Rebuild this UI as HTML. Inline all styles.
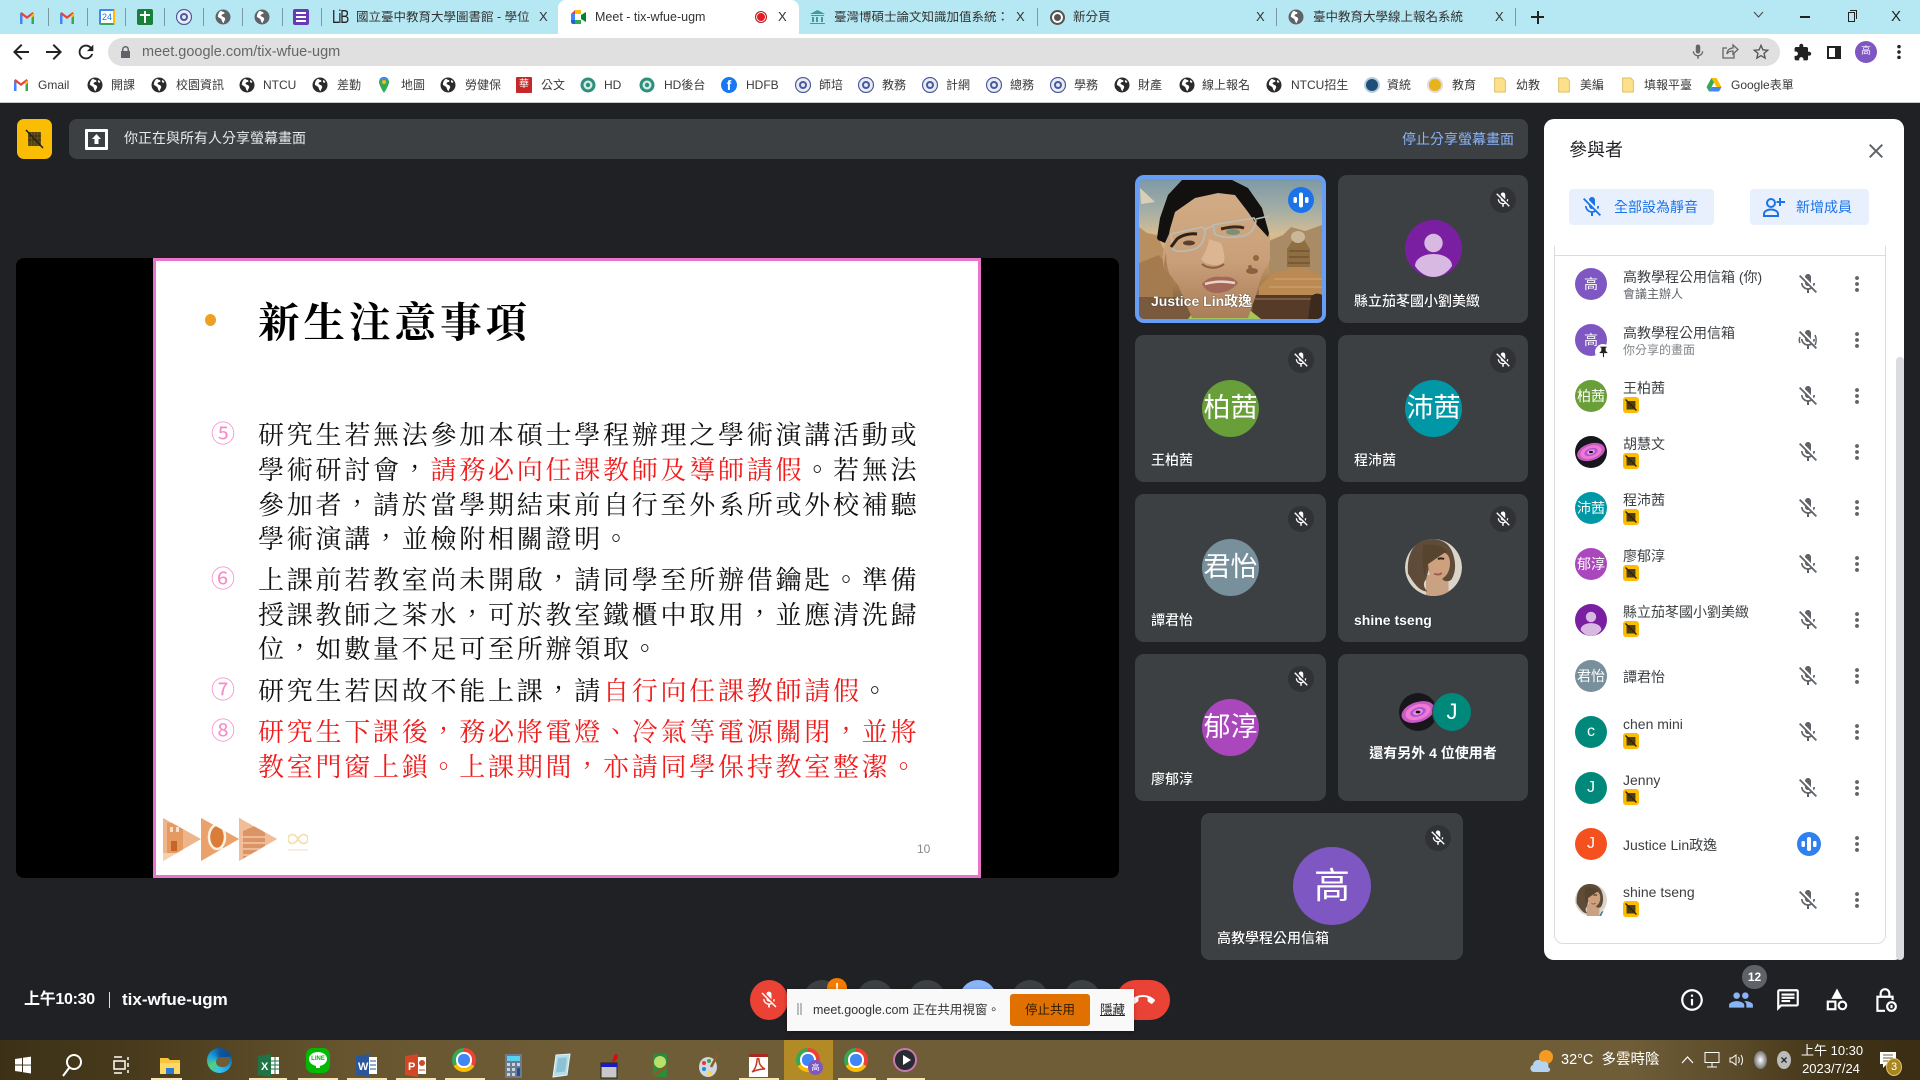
<!DOCTYPE html>
<html lang="zh-TW"><head><meta charset="utf-8"><title>Meet - tix-wfue-ugm</title>
<style>
*{box-sizing:border-box}
html,body{margin:0;padding:0;width:1920px;height:1080px;overflow:hidden;background:#202124;font-family:"Liberation Sans","Noto Sans CJK TC",sans-serif}
.a,.t,.i,.tile,.row,.row>*{position:absolute}
.t{white-space:nowrap;line-height:1}
.sep{position:absolute;top:8px;width:1px;height:18px;background:#7a9aa3}
.tb{font-size:12.5px;color:#333;top:11px}
.bm{font-size:12px;color:#3a3a3a;top:79px}
.g{position:absolute;top:77px;width:16px;height:16px}
.tile{background:#3c4043;border-radius:9px}
.av{position:absolute;border-radius:50%;color:#fff;text-align:center}
.nm{position:absolute;left:16px;bottom:14px;font-size:14px;font-weight:500;color:#fff;white-space:nowrap;line-height:16px;text-shadow:0 0 1px #000}
.mb{position:absolute;width:26px;height:26px;border-radius:50%;background:#303235;right:12px;top:12px}
.mb svg{position:absolute;left:4px;top:4px;width:18px;height:18px;fill:#fff}
.row{left:1554px;width:330px;height:56px}
.row .ra{left:21px;top:12px;width:32px;height:32px;border-radius:50%;color:#fff;text-align:center;line-height:32px;font-size:14px}
.row .n{left:69px;font-size:14px;color:#3c4043;white-space:nowrap;line-height:16px;top:12px}
.row .n.h{top:13px}
.row .n.c{top:21px}
.row .s{left:69px;top:31px;font-size:12px;line-height:14px;color:#5f6368;white-space:nowrap}
.row .b{left:69px;top:29px;width:16px;height:16px}
.row .m{left:242px;top:16px;width:24px;height:24px;fill:#5f6368}
.row .d{left:292px;top:17px;width:22px;height:22px;fill:#5f6368}
.sl{position:absolute;left:258px;white-space:nowrap;font-family:"Liberation Serif","Noto Serif CJK SC",serif;font-size:26px;letter-spacing:2.75px;line-height:34px;color:#111}
.sl b{font-weight:400;color:#f01c1c}
.cn{position:absolute;left:209px;width:28px;text-align:center;font-size:24px;line-height:34px;color:#f48cc8;font-family:"DejaVu Sans",sans-serif;font-weight:300}
.cb{position:absolute;top:980px;width:38px;height:40px;border-radius:50%;background:#3c4043}
.ti{position:absolute;top:1050px;width:30px;height:30px}
.ul{position:absolute;top:1078px;height:2px;background:#f6e6b4}
.chrome{position:absolute;border-radius:50%;background:conic-gradient(#ea4335 0 120deg,#fbbc04 120deg 240deg,#34a853 240deg 360deg)}
.chrome:after{content:"";position:absolute;left:27%;top:27%;width:46%;height:46%;border-radius:50%;background:#4285f4;box-shadow:0 0 0 2px #fff}
</style></head><body>
<svg width="0" height="0" style="position:absolute">
<defs>
<symbol id="micoff" viewBox="0 0 24 24"><path d="M19 11h-1.700c0 .74-.16 1.430-.43 2.050l1.230 1.230c.56-.98.9-2.090.9-3.280zm-4.020.17c0-.06.02-.11.02-.17V5c0-1.660-1.340-3-3-3s-3 1.340-3 3v.18l5.980 5.990zM4.270 3L3 4.270l6.010 6.010V11c0 1.660 1.330 3 2.990 3 .22 0 .44-.03.65-.08l1.660 1.660c-.71.33-1.500.52-2.310.52-2.760 0-5.300-2.100-5.300-5.100H5c0 3.410 2.720 6.230 6 6.720V21h2v-3.280c.91-.13 1.770-.45 2.540-.9L19.730 21 21 19.730 4.270 3z"/></symbol>
<symbol id="more" viewBox="0 0 24 24"><circle cx="12" cy="5.500" r="2.100"/><circle cx="12" cy="12" r="2.100"/><circle cx="12" cy="18.500" r="2.100"/></symbol>
<symbol id="globe" viewBox="0 0 16 16"><circle cx="8" cy="8" r="7.500" fill="#2b2b2b"/><path d="M6 1.600C7 3 9 2.600 9.500 3.800 9.800 5 8 5 7 5.600 5.600 6.400 7.500 7.600 8.600 8c1.500.6 2 2 1.300 3.200-.5 1-1.200 1.400-1.200 3-1.200-.6-1.800-2-2-3.300C6.500 9.500 4 9 2.800 7.600 3 5 4 3 6 1.600z" fill="#fff"/><path d="M11.500 2.800l2 2.200-1.500 1-1.200-1.500z" fill="#fff"/></symbol>
<symbol id="gglobe" viewBox="0 0 16 16"><circle cx="8" cy="8" r="7.500" fill="#5f6368"/><path d="M6 1.600C7 3 9 2.600 9.500 3.800 9.800 5 8 5 7 5.600 5.600 6.400 7.500 7.600 8.600 8c1.500.6 2 2 1.300 3.200-.5 1-1.200 1.400-1.200 3-1.200-.6-1.800-2-2-3.300C6.500 9.500 4 9 2.800 7.600 3 5 4 3 6 1.600z" fill="#fff"/></symbol>
<symbol id="gmail" viewBox="0 0 16 14"><path d="M1 13V2.600L3.500 3v10z" fill="#4285f4"/><path d="M15 13V2.600L12.500 3v10z" fill="#34a853"/><path d="M1 2.600l7 5.400 7-5.400L13.500 1 8 5.200 2.500 1z" fill="#ea4335"/><path d="M12.500 3v4L15 5V2.600z" fill="#fbbc04"/></symbol>
<symbol id="seal" viewBox="0 0 16 16"><circle cx="8" cy="8" r="7.500" fill="#e9ecf5" stroke="#4a5a9a" stroke-width="1.200"/><circle cx="8" cy="8" r="4" fill="#4a5a9a"/><circle cx="8" cy="8" r="2" fill="#dfe6f5"/></symbol>
<symbol id="teal" viewBox="0 0 16 16"><circle cx="8" cy="8" r="7.500" fill="#2f8f7c"/><circle cx="8" cy="8" r="4.500" fill="#d7ece6"/><circle cx="8" cy="8" r="2.200" fill="#2f8f7c"/></symbol>
<symbol id="fold" viewBox="0 0 14 18"><path d="M1 1h9l3 3v13H1z" fill="#ffe08a" stroke="#d8b95c"/></symbol>
<symbol id="nop" viewBox="0 0 16 16"><rect width="16" height="16" rx="3" fill="#fbbc04"/><rect x="3.500" y="4" width="9" height="8.500" fill="#5a4a1c"/><path d="M5 4v8.500M7 4v8.500M9 4v8.500M11 4v8.500" stroke="#3a2c08" stroke-width=".8"/><path d="M2.500 2.500l11 11" stroke="#2b2208" stroke-width="1.300"/></symbol>
<symbol id="galaxy" viewBox="0 0 38 38"><circle cx="19" cy="19" r="19" fill="#16161b"/><ellipse cx="19" cy="19" rx="17" ry="10" transform="rotate(-18 19 19)" fill="#c85ac8"/><ellipse cx="19" cy="19" rx="13" ry="7.500" transform="rotate(-18 19 19)" fill="#f07ad0"/><ellipse cx="19" cy="19" rx="8" ry="4.500" transform="rotate(-18 19 19)" fill="#a856d8"/><ellipse cx="19" cy="19" rx="5" ry="2.800" transform="rotate(-18 19 19)" fill="#f590d8"/><ellipse cx="19" cy="19" rx="2.400" ry="1.400" fill="#111"/></symbol>
<symbol id="woman" viewBox="0 0 38 38"><circle cx="19" cy="19" r="19" fill="#d9d5c9"/><path d="M14 38V24h15v14z" fill="#c9a183"/><path d="M29 38c1-4 3-6 5-6l-3 6z" fill="#4a7a94"/><path d="M2 23C1 10 6 1 16 0c8-.5 14 3 16 10 2 6 2 12-1 17-2 2-5 1-6 0l3-13-10-2-4 15c-2 2-2 5 1 8-5 0-9-5-13-12z" fill="#5e4b3a"/><path d="M15 14c2-3 7-5 11-5 3 1 4 4 4 7 0 6-3 10-7 11-3 1-6-1-7-5z" fill="#cfa07e"/><path d="M12 4c6-1 12 0 16 4l-13 9-2 8c-1-6-2-14-1-21z" fill="#57442f"/><path d="M22 13.500c1-.8 3-.8 4 0" stroke="#2e2018" stroke-width="1.300" fill="none"/><path d="M19.500 23c1.500 1 4 1 5-.5" stroke="#9a5a50" stroke-width="1.200" fill="none"/></symbol>
<symbol id="person" viewBox="0 0 57 57"><circle cx="28.500" cy="28.500" r="28.500" fill="#7b1fa2"/><circle cx="28.500" cy="23" r="9.200" fill="#d7b9e2"/><path d="M10 46c0-7 8-12 18.500-12S47 39 47 46c-4.500 6.500-11 11-18.500 11S14.500 52.500 10 46z" fill="#d7b9e2"/></symbol>
</defs></svg>

<!-- tab strip -->
<div class="a" style="left:0;top:0;width:1920px;height:34px;background:#b5e8f3"></div>
<svg class="i" style="left:19px;top:11px" width="16" height="14"><use href="#gmail"/></svg>
<svg class="i" style="left:59px;top:11px" width="16" height="14"><use href="#gmail"/></svg>
<div class="i" style="left:99px;top:9px;width:16px;height:16px;background:#fff;border:2px solid #4285f4;border-bottom-color:#34a853;border-right-color:#fbbc04;border-radius:2px;font-size:9px;line-height:12px;text-align:center;color:#1a73e8">24</div>
<div class="i" style="left:137px;top:9px;width:16px;height:16px;background:#188038;border-radius:2px"><div class="a" style="left:7px;top:2px;width:2px;height:12px;background:#fff"></div><div class="a" style="left:3px;top:5px;width:10px;height:2px;background:#fff"></div></div>
<svg class="i" style="left:176px;top:9px" width="16" height="16"><use href="#seal"/></svg>
<svg class="i" style="left:215px;top:9px" width="16" height="16"><use href="#gglobe"/></svg>
<svg class="i" style="left:254px;top:9px" width="16" height="16"><use href="#gglobe"/></svg>
<div class="i" style="left:293px;top:9px;width:16px;height:16px;background:#673ab7;border-radius:2px"><div class="a" style="left:3px;top:3px;width:10px;height:2px;background:#fff"></div><div class="a" style="left:3px;top:7px;width:10px;height:2px;background:#fff"></div><div class="a" style="left:3px;top:11px;width:10px;height:2px;background:#fff"></div></div>
<div class="sep" style="left:48px"></div><div class="sep" style="left:87px"></div><div class="sep" style="left:125px"></div><div class="sep" style="left:164px"></div><div class="sep" style="left:203px"></div><div class="sep" style="left:242px"></div><div class="sep" style="left:282px"></div><div class="sep" style="left:321px"></div>
<div class="t" style="left:332px;top:8px;font-size:18px;color:#222;letter-spacing:-1.500px;transform:scaleX(.75);transform-origin:left">LiB</div>
<div class="t tb" style="left:356px;width:173px;overflow:hidden">國立臺中教育大學圖書館 - 學位論文</div>
<div class="t" style="left:539px;top:10px;font-size:13px;color:#333">X</div>
<div class="a" style="left:558px;top:0;width:241px;height:34px;background:#fff;border-radius:8px 8px 0 0"></div>
<svg class="i" style="left:571px;top:9px" width="16" height="16" viewBox="0 0 16 16"><path d="M0 5l4-4h6v4H4v0z" fill="#ea4335"/><path d="M0 5h4v6H0z" fill="#4285f4"/><path d="M0 11h4v0l6 0v4H2c-1 0-2-1-2-2z" fill="#1967d2"/><path d="M4 5h6v0l0 6H4z" fill="#fff"/><path d="M10 1v4H4V1z" fill="#fbbc04"/><path d="M4 11h6v4H4z" fill="#34a853"/><path d="M10 6l5-3v10l-5-3z" fill="#00832d"/></svg>
<div class="t tb" style="left:595px">Meet - tix-wfue-ugm</div>
<div class="i" style="left:755px;top:11px;width:12px;height:12px;border-radius:50%;background:#e31c25;border:1.500px solid #b5161d;box-shadow:inset 0 0 0 1px #fff"></div>
<div class="t" style="left:778px;top:10px;font-size:13px;color:#333">X</div>
<svg class="i" style="left:809px;top:9px" width="17" height="16" viewBox="0 0 17 16"><path d="M1 5l7.500-4L16 5zM2 6h13v1H2zM3 8h2v5H3zM7 8h2v5H7zM12 8h2v5h-2zM1 14h15v1H1z" fill="#3c9e94"/></svg>
<div class="t tb" style="left:834px;width:175px;overflow:hidden">臺灣博碩士論文知識加值系統：自由的</div>
<div class="t" style="left:1016px;top:10px;font-size:13px;color:#333">X</div><div class="sep" style="left:1037px"></div>
<div class="a" style="left:1050px;top:10px;width:15px;height:15px;border-radius:50%;background:#555;border:2px solid #555;box-shadow:inset 0 0 0 2px #fff"></div>
<div class="t tb" style="left:1073px">新分頁</div>
<div class="t" style="left:1256px;top:10px;font-size:13px;color:#333">X</div><div class="sep" style="left:1276px"></div>
<svg class="i" style="left:1288px;top:9px" width="16" height="16"><use href="#gglobe"/></svg>
<div class="t tb" style="left:1313px">臺中教育大學線上報名系統</div>
<div class="t" style="left:1495px;top:10px;font-size:13px;color:#333">X</div><div class="sep" style="left:1515px"></div>
<div class="a" style="left:1531px;top:16px;width:13px;height:2px;background:#222"></div><div class="a" style="left:1537px;top:10.500px;width:2px;height:13px;background:#222"></div>
<svg class="i" style="left:1753px;top:11px" width="11" height="8"><path d="M1 1l4.500 5L10 1" fill="none" stroke="#444"/></svg>
<div class="a" style="left:1800px;top:16px;width:10px;height:1.500px;background:#222"></div>
<div class="a" style="left:1848px;top:12px;width:7px;height:10px;border:1px solid #222"></div><div class="a" style="left:1850px;top:10px;width:7px;height:9px;border:1px solid #222;border-left:0;border-bottom:0"></div>
<div class="t" style="left:1891px;top:9px;font-size:15px;color:#222">X</div>

<!-- toolbar -->
<div class="a" style="left:0;top:34px;width:1920px;height:68px;background:#fff"></div>
<svg class="i" style="left:9px;top:40px" width="24" height="24" viewBox="0 0 24 24" fill="#222"><path d="M20 11H7.830l5.590-5.590L12 4l-8 8 8 8 1.410-1.410L7.830 13H20v-2z"/></svg>
<svg class="i" style="left:42px;top:40px" width="24" height="24" viewBox="0 0 24 24" fill="#222"><path d="M12 4l-1.410 1.410L16.170 11H4v2h12.170l-5.580 5.590L12 20l8-8z"/></svg>
<svg class="i" style="left:75px;top:41px" width="22" height="22" viewBox="0 0 24 24" fill="#222"><path d="M17.650 6.350C16.200 4.900 14.210 4 12 4c-4.420 0-7.990 3.580-7.990 8s3.570 8 7.990 8c3.730 0 6.840-2.550 7.730-6h-2.080c-.82 2.330-3.040 4-5.650 4-3.310 0-6-2.690-6-6s2.690-6 6-6c1.660 0 3.140.69 4.220 1.780L13 11h7V4l-2.350 2.350z"/></svg>
<div class="a" style="left:108px;top:38px;width:1672px;height:28px;background:#e0e0e0;border-radius:14px"></div>
<svg class="i" style="left:120px;top:46px" width="11" height="12" viewBox="0 0 11 12"><path d="M2 5V3.500a3.500 3.500 0 017 0V5h1v7H1V5zm1.500 0h4V3.500a2 2 0 00-4 0z" fill="#5f6368"/></svg>
<div class="t" style="left:142px;top:45px;font-size:14.500px;color:#666">meet.google.com/tix-wfue-ugm</div>
<svg class="i" style="left:1689px;top:43px" width="18" height="18" viewBox="0 0 24 24" fill="#666"><path d="M12 14c1.660 0 3-1.340 3-3V5c0-1.660-1.340-3-3-3S9 3.340 9 5v6c0 1.660 1.340 3 3 3zm5.300-3c0 3-2.540 5.100-5.300 5.100S6.700 14 6.700 11H5c0 3.410 2.720 6.230 6 6.720V21h2v-3.280c3.280-.48 6-3.300 6-6.720h-1.700z"/></svg>
<svg class="i" style="left:1721px;top:43px" width="18" height="18" viewBox="0 0 18 18" fill="none" stroke="#666" stroke-width="1.300"><path d="M13 10v5H2V5h4"/><path d="M6 11c0-4 3-6 6-6V2l5 4.500-5 4.500V8c-3 0-5 1-6 3z"/></svg>
<svg class="i" style="left:1751px;top:42px" width="20" height="20" viewBox="0 0 24 24" fill="#555"><path d="M22 9.240l-7.190-.62L12 2 9.190 8.630 2 9.240l5.460 4.730L5.820 21 12 17.270 18.180 21l-1.630-7.030L22 9.240zM12 15.400l-3.760 2.270 1-4.280-3.320-2.880 4.380-.38L12 6.100l1.710 4.040 4.380.38-3.320 2.880 1 4.280L12 15.400z"/></svg>
<svg class="i" style="left:1793px;top:43px" width="19" height="19" viewBox="0 0 24 24" fill="#222"><path d="M20.500 11H19V7c0-1.100-.9-2-2-2h-4V3.500C13 2.120 11.880 1 10.500 1S8 2.120 8 3.500V5H4c-1.100 0-1.990.9-1.990 2v3.800H3.500c1.490 0 2.700 1.210 2.700 2.700s-1.210 2.700-2.700 2.700H2V20c0 1.100.9 2 2 2h3.800v-1.500c0-1.490 1.210-2.700 2.700-2.700 1.490 0 2.700 1.210 2.700 2.700V22H17c1.100 0 2-.9 2-2v-4h1.500c1.380 0 2.500-1.120 2.500-2.500S21.880 11 20.500 11z"/></svg>
<div class="a" style="left:1827px;top:46px;width:14px;height:13px;border:2px solid #222;border-left-width:2px;border-right-width:6px"></div>
<div class="av" style="left:1855px;top:41px;width:22px;height:22px;background:#7e57c2;font-size:10px;line-height:22px">高</div>
<svg class="i" style="left:1889px;top:42px" width="20" height="20" viewBox="0 0 24 24" fill="#222"><use href="#more"/></svg>

<!-- bookmarks -->
<svg class="g" style="left:13px;top:78px;height:14px"><use href="#gmail"/></svg><div class="t bm" style="left:38px">Gmail</div>
<svg class="g" style="left:87px"><use href="#globe"/></svg><div class="t bm" style="left:111px">開課</div>
<svg class="g" style="left:151px"><use href="#globe"/></svg><div class="t bm" style="left:176px">校園資訊</div>
<svg class="g" style="left:239px"><use href="#globe"/></svg><div class="t bm" style="left:263px">NTCU</div>
<svg class="g" style="left:312px"><use href="#globe"/></svg><div class="t bm" style="left:337px">差勤</div>
<svg class="g" style="left:376px" viewBox="0 0 16 16"><path d="M8 0C4.700 0 3 2.500 3 5c0 3.500 5 11 5 11s5-7.500 5-11c0-2.500-1.700-5-5-5z" fill="#34a853"/><path d="M8 0C6 0 4.500 1 3.800 2.300L8 6l4-4C11.200 1 9.800 0 8 0z" fill="#4285f4"/><circle cx="8" cy="5" r="2" fill="#fbbc04"/></svg><div class="t bm" style="left:401px">地圖</div>
<svg class="g" style="left:440px"><use href="#globe"/></svg><div class="t bm" style="left:465px">勞健保</div>
<div class="g" style="left:516px;background:#c62828;border-radius:1px;color:#fff;font-size:10px;line-height:16px;text-align:center">華</div><div class="t bm" style="left:541px">公文</div>
<svg class="g" style="left:580px"><use href="#teal"/></svg><div class="t bm" style="left:604px">HD</div>
<svg class="g" style="left:639px"><use href="#teal"/></svg><div class="t bm" style="left:664px">HD後台</div>
<div class="g" style="left:721px;background:#1877f2;border-radius:50%;color:#fff;font:700 14px/17px 'Liberation Sans',sans-serif;text-align:center">f</div><div class="t bm" style="left:746px">HDFB</div>
<svg class="g" style="left:795px"><use href="#seal"/></svg><div class="t bm" style="left:819px">師培</div>
<svg class="g" style="left:858px"><use href="#seal"/></svg><div class="t bm" style="left:882px">教務</div>
<svg class="g" style="left:922px"><use href="#seal"/></svg><div class="t bm" style="left:946px">計網</div>
<svg class="g" style="left:986px"><use href="#seal"/></svg><div class="t bm" style="left:1010px">總務</div>
<svg class="g" style="left:1050px"><use href="#seal"/></svg><div class="t bm" style="left:1074px">學務</div>
<svg class="g" style="left:1114px"><use href="#globe"/></svg><div class="t bm" style="left:1138px">財產</div>
<svg class="g" style="left:1179px"><use href="#globe"/></svg><div class="t bm" style="left:1202px">線上報名</div>
<svg class="g" style="left:1266px"><use href="#globe"/></svg><div class="t bm" style="left:1291px">NTCU招生</div>
<div class="g" style="left:1364px;background:#1f4e79;border-radius:50%;border:2px solid #b7cde0"></div><div class="t bm" style="left:1387px">資統</div>
<div class="g" style="left:1427px;background:#e8b21c;border-radius:50%;border:2px solid #ddd"></div><div class="t bm" style="left:1452px">教育</div>
<svg class="g" style="left:1492px"><use href="#fold"/></svg><div class="t bm" style="left:1516px">幼教</div>
<svg class="g" style="left:1556px"><use href="#fold"/></svg><div class="t bm" style="left:1580px">美編</div>
<svg class="g" style="left:1620px"><use href="#fold"/></svg><div class="t bm" style="left:1644px">填報平臺</div>
<svg class="g" style="left:1706px" viewBox="0 0 16 16"><path d="M5.500 1h5l5 9h-5z" fill="#fbbc04"/><path d="M5.500 1L.5 10l2.500 4.500L8 5.500z" fill="#34a853"/><path d="M5.500 10h10L13 14.500H3z" fill="#4285f4"/></svg><div class="t bm" style="left:1731px">Google表單</div>
<div class="a" style="left:0;top:102px;width:1920px;height:1px;background:#c8c8c8"></div>

<!-- banner -->
<div class="a" style="left:17px;top:119px;width:35px;height:40px;background:#fbbc04;border-radius:7px"></div>
<svg class="i" style="left:25px;top:129px" width="19" height="20" viewBox="0 0 19 20"><rect x="3" y="3" width="13" height="14" fill="#6b5518"/><path d="M5 3v14M8 3v14M11 3v14M14 3v14M3 7h13M3 11h13" stroke="#3c2e0a" stroke-width=".9"/><path d="M1 1l17 18" stroke="#222" stroke-width="1.600"/></svg>
<div class="a" style="left:69px;top:119px;width:1459px;height:40px;background:#3c4043;border-radius:8px"></div>
<div class="a" style="left:85px;top:129px;width:23px;height:21px;background:#fff;border-radius:1px"><div class="a" style="left:3px;top:3px;width:17px;height:15px;background:#3c4043"></div><svg class="a" style="left:7px;top:5px" width="9" height="11" viewBox="0 0 9 11"><path d="M4.500 0L9 5H6.500v5h-4V5H0z" fill="#fff"/></svg></div>
<div class="t" style="left:124px;top:130px;font-size:14px;line-height:16px;color:#e8eaed">你正在與所有人分享螢幕畫面</div>
<div class="t" style="left:1402px;top:131px;font-size:14px;line-height:16px;color:#8ab4f8">停止分享螢幕畫面</div>

<!-- stage -->
<div class="a" style="left:16px;top:258px;width:1103px;height:620px;background:#000;border-radius:8px"></div>
<div class="a" style="left:153px;top:258px;width:828px;height:620px;background:#fff;border:3px solid #ea74ca"></div>
<div class="a" style="left:205px;top:314px;width:11px;height:12px;border-radius:50%;background:#f0a020"></div>
<div class="t" style="left:258px;top:300px;font-family:'Liberation Serif','Noto Serif CJK SC',serif;font-size:41.500px;font-weight:700;letter-spacing:4px;line-height:46px;color:#000">新生注意事項</div>
<div class="cn" style="top:417px">⑤</div>
<div class="sl" style="top:419px">研究生若無法參加本碩士學程辦理之學術演講活動或</div>
<div class="sl" style="top:454px">學術研討會，<b>請務必向任課教師及導師請假</b>。若無法</div>
<div class="sl" style="top:489px">參加者，請於當學期結束前自行至外系所或外校補聽</div>
<div class="sl" style="top:523px">學術演講，並檢附相關證明。</div>
<div class="cn" style="top:562px">⑥</div>
<div class="sl" style="top:564px">上課前若教室尚未開啟，請同學至所辦借鑰匙。準備</div>
<div class="sl" style="top:599px">授課教師之茶水，可於教室鐵櫃中取用，並應清洗歸</div>
<div class="sl" style="top:633px">位，如數量不足可至所辦領取。</div>
<div class="cn" style="top:673px">⑦</div>
<div class="sl" style="top:675px">研究生若因故不能上課，請<b>自行向任課教師請假</b>。</div>
<div class="cn" style="top:714px">⑧</div>
<div class="sl" style="top:716px"><b>研究生下課後，務必將電燈、冷氣等電源關閉，並將</b></div>
<div class="sl" style="top:751px"><b>教室門窗上鎖。上課期間，亦請同學保持教室整潔。</b></div>
<svg class="i" style="left:163px;top:817px" width="115" height="46" viewBox="0 0 115 46">
<defs><clipPath id="tr"><path d="M0 1l38 21L0 44zM38 1l38 21L38 44zM76 1l38 21L76 44z"/></clipPath></defs>
<path d="M38 1h.1v1L38 1zM76 0l4 3-4 40z" fill="#f0ecfa"/>
<g clip-path="url(#tr)"><rect width="115" height="46" fill="#eeb48a"/>
<rect x="4" y="6" width="16" height="30" fill="#e59a62"/><rect x="7" y="10" width="3" height="5" fill="#f8e0cc"/><rect x="13" y="10" width="3" height="5" fill="#f8e0cc"/><rect x="8" y="24" width="6" height="10" fill="#c9642a"/><rect x="0" y="36" width="30" height="8" fill="#f6cfae"/>
<rect x="38" y="0" width="38" height="46" fill="#eba26a"/><ellipse cx="54" cy="20" rx="8" ry="12" fill="#d97d38" stroke="#fdf1e4" stroke-width="2.500"/><path d="M58 30l6 8" stroke="#fdf1e4" stroke-width="2.500"/>
<rect x="76" y="0" width="38" height="46" fill="#f0bd98"/><path d="M80 14l14-6 8 8v26H80z" fill="#dc9464"/><path d="M80 20h22M80 26h22M80 32h22M80 38h22" stroke="#f6d3ba" stroke-width="1.200"/></g></svg>
<svg class="i" style="left:288px;top:833px" width="20" height="12" viewBox="0 0 20 12"><path d="M10 6C8 2.500 6 1.500 4.500 1.500a4.500 4.500 0 000 9C6 10.500 8 9.500 10 6s4-4.500 5.500-4.500a4.500 4.500 0 010 9C14 10.500 12 9.500 10 6z" fill="none" stroke="#f6dfb0" stroke-width="1.800"/></svg>
<div class="a" style="left:288px;top:849px;width:20px;height:2px;background:#f8efde"></div>
<div class="t" style="left:917px;top:843px;font-size:12px;color:#8a8a8a">10</div>

<!-- tiles -->
<div class="tile" style="left:1135px;top:175px;width:191px;height:148px;background:#669df6;overflow:hidden">
<svg style="position:absolute;left:4px;top:4px;border-radius:5px" width="183" height="140" viewBox="0 0 183 140">
<defs>
<linearGradient id="sky" x1="0" y1="0" x2="0" y2="1"><stop offset="0" stop-color="#7d99a6"/><stop offset=".22" stop-color="#a3aea6"/><stop offset=".4" stop-color="#d6bd93"/><stop offset=".6" stop-color="#c49a66"/><stop offset="1" stop-color="#6e4c30"/></linearGradient>
<linearGradient id="sk" x1="0" y1="0" x2="0" y2="1"><stop offset="0" stop-color="#d2ac86"/><stop offset=".55" stop-color="#c89f78"/><stop offset="1" stop-color="#a97e58"/></linearGradient>
</defs>
<rect width="183" height="140" fill="url(#sky)"/>
<path d="M1 9l15 14-14 2z" fill="#d8d0b6"/>
<path d="M0 48l8 6 10 2 12 26v58H0z" fill="#b98f60"/><path d="M0 84l20-8 14 20v44H0z" fill="#a47a4f"/>
<path d="M130 62l14-6 8-8 14 4 17-6v50h-53z" fill="#a98c66"/>
<path d="M148 88V70l4-6 3-6c2-3 7-3 9 0l3 6 4 6v18z" fill="#8f6e42"/><ellipse cx="159" cy="58" rx="7" ry="6" fill="#c9b798"/><path d="M150 72h20M150 78h20M149 84h22" stroke="#61472a"/>
<path d="M120 108l14-14 26-6 23 8v24h-63z" fill="#bb8a52"/><path d="M135 100h48M130 108h53" stroke="#d0a67a"/>
<path d="M114 116h69v24h-70z" fill="#563c28"/><path d="M116 120h67" stroke="#7a5a40" stroke-width="2"/><path d="M172 118c3-4 8-4 11-2v24h-14z" fill="#3c2a1c"/>
<path d="M0 118h50v22H0z" fill="#7a5a3e"/>
<path d="M49 140l7-10 52-1 14 11z" fill="#a5c75a"/>
<path d="M31 50l5-17 20-14 23-5 17 2 13 17 9 13 13 10 0 25-8 15-7 23-7 20H53l-14-33-8-10-7-7V73z" fill="url(#sk)"/>
<path d="M18 59l3-20 8-23L43 1h50l16 8 14 20 7 25-1 4-11-12-9-13-13-17-17-2-23 5-20 14-5 17-1 5-4 9-7-3z" fill="#12110f"/>
<path d="M27 73c0 12 2 18 4 23l-7-7z" fill="#a97f58"/>
<ellipse cx="113" cy="92" rx="6" ry="3" fill="#8a6240"/>
<path d="M32 55l31-7 3 3c0 8-2 14-8 18-7 3-21 5-24 1zM74 46l41-7 2 3c-1 7-5 13-13 15-10 2-23 2-28-2zM66 50l8-3M117 40l13-3" fill="none" stroke="#b9bdb6" stroke-width="1.600"/>
<path d="M32 68l6-8c5-4 13-6 20-5" fill="none" stroke="#2d2118" stroke-width="3"/>
<path d="M82 50c8-2 17-3 23-1" fill="none" stroke="#3a2a1c" stroke-width="3"/>
<ellipse cx="50" cy="64" rx="6" ry="2.500" fill="#5a4030"/><ellipse cx="94" cy="53" rx="7" ry="3" fill="#7c8e76"/>
<path d="M62 80c4 6 16 8 22 4 3-3 1-12-2-20l-12-4c-1 8-4 14-8 20z" fill="#dcb592"/>
<path d="M63 85c6 5 16 5 22 0" fill="none" stroke="#8a5e3e" stroke-width="2"/>
<path d="M63 105c6-7 13-8 20-7 7-1 13 1 16 6-6 7-13 10-21 10-7 0-12-3-15-9z" fill="#a4685a"/><path d="M66 105c10-3 20-3 30-1" stroke="#e8d6c6" stroke-width="2.500" fill="none"/>
<circle cx="117" cy="79" r="3" fill="#94683f"/><circle cx="111" cy="88" r="2" fill="#94683f"/>
</svg>
<div class="mb" style="background:#1a73e8;right:12px;top:12px"><svg viewBox="0 0 26 26" style="left:0;top:0;width:26px;height:26px"><rect x="5.500" y="10" width="3.500" height="6" rx="1.500"/><rect x="11" y="5.500" width="4" height="15" rx="2"/><rect x="17" y="10" width="3.500" height="6" rx="1.500"/></svg></div>
<div class="nm" style="font-weight:700">Justice Lin政逸</div></div>

<div class="tile" style="left:1338px;top:175px;width:190px;height:148px">
<div class="mb"><svg><use href="#micoff"/></svg></div>
<svg class="a" style="left:67px;top:45px" width="57" height="57"><use href="#person"/></svg>
<div class="nm">縣立茄苳國小劉美緻</div></div>

<div class="tile" style="left:1135px;top:335px;width:191px;height:147px"><div class="mb"><svg><use href="#micoff"/></svg></div>
<div class="av" style="left:67px;top:45px;width:57px;height:57px;background:#689f38;font-size:27px;line-height:57px">柏茜</div><div class="nm">王柏茜</div></div>
<div class="tile" style="left:1338px;top:335px;width:190px;height:147px"><div class="mb"><svg><use href="#micoff"/></svg></div>
<div class="av" style="left:67px;top:45px;width:57px;height:57px;background:#0097a7;font-size:27px;line-height:57px">沛茜</div><div class="nm">程沛茜</div></div>

<div class="tile" style="left:1135px;top:494px;width:191px;height:148px"><div class="mb"><svg><use href="#micoff"/></svg></div>
<div class="av" style="left:67px;top:45px;width:57px;height:57px;background:#78909c;font-size:27px;line-height:57px">君怡</div><div class="nm">譚君怡</div></div>
<div class="tile" style="left:1338px;top:494px;width:190px;height:148px"><div class="mb"><svg><use href="#micoff"/></svg></div>
<svg class="a" style="left:67px;top:45px;border-radius:50%" width="57" height="57"><use href="#woman"/></svg><div class="nm" style="font-weight:700">shine tseng</div></div>

<div class="tile" style="left:1135px;top:654px;width:191px;height:147px"><div class="mb"><svg><use href="#micoff"/></svg></div>
<div class="av" style="left:67px;top:45px;width:57px;height:57px;background:#ab47bc;font-size:27px;line-height:57px">郁淳</div><div class="nm">廖郁淳</div></div>
<div class="tile" style="left:1338px;top:654px;width:190px;height:147px">
<svg class="a" style="left:61px;top:39px" width="38" height="38"><use href="#galaxy"/></svg>
<div class="av" style="left:95px;top:39px;width:38px;height:38px;background:#00897b;font-size:22px;line-height:38px;box-shadow:0 0 0 1px #3c4043">J</div>
<div class="t" style="left:0;top:91px;width:190px;text-align:center;font-size:14px;font-weight:700;line-height:16px;color:#fff">還有另外 4 位使用者</div></div>

<div class="tile" style="left:1201px;top:813px;width:262px;height:147px"><div class="mb"><svg><use href="#micoff"/></svg></div>
<div class="av" style="left:92px;top:34px;width:78px;height:78px;background:#7e57c2;font-size:36px;line-height:78px">高</div><div class="nm">高教學程公用信箱</div></div>

<!-- participants panel -->
<div class="a" style="left:1544px;top:119px;width:360px;height:841px;background:#fff;border-radius:10px"></div>
<div class="t" style="left:1569px;top:140px;font-size:18px;line-height:20px;color:#202124">參與者</div>
<svg class="i" style="left:1864px;top:139px" width="24" height="24" viewBox="0 0 24 24" fill="#5f6368"><path d="M19 6.410L17.590 5 12 10.590 6.410 5 5 6.410 10.590 12 5 17.590 6.410 19 12 13.410 17.590 19 19 17.590 13.410 12z"/></svg>
<div class="a" style="left:1569px;top:189px;width:145px;height:36px;background:#e8f0fe;border-radius:4px"></div>
<svg class="i" style="left:1580px;top:195px;fill:#1a73e8" width="24" height="24"><use href="#micoff"/></svg>
<div class="t" style="left:1614px;top:199px;font-size:14px;line-height:16px;color:#1a73e8">全部設為靜音</div>
<div class="a" style="left:1750px;top:189px;width:119px;height:36px;background:#e8f0fe;border-radius:4px"></div>
<svg class="i" style="left:1762px;top:197px" width="24" height="20" viewBox="0 0 24 20" fill="none" stroke="#1a73e8" stroke-width="2"><circle cx="9" cy="6" r="4"/><path d="M2 19v-2c0-3 4-4.500 7-4.500s7 1.500 7 4.500v2z"/><path d="M18 1v8M14.500 5H23"/></svg>
<div class="t" style="left:1796px;top:199px;font-size:14px;line-height:16px;color:#1a73e8">新增成員</div>
<div class="a" style="left:1554px;top:246px;width:332px;height:698px;border:1px solid #dadce0;border-top:0;border-radius:0 0 9px 9px"></div>
<div class="a" style="left:1555px;top:255px;width:330px;height:1px;background:#dadce0"></div>
<div class="a" style="left:1896px;top:357px;width:8px;height:603px;background:#dadce0;border-radius:4px"></div>

<div class="row" style="top:256px"><div class="ra" style="background:#7e57c2">高</div><div class="n h">高教學程公用信箱 (你)</div><div class="s">會議主辦人</div><svg class="m"><use href="#micoff"/></svg><svg class="d"><use href="#more"/></svg></div>
<div class="row" style="top:312px"><div class="ra" style="background:#7e57c2">高</div><div class="a" style="left:41px;top:32px;width:16px;height:16px;background:#fff;border-radius:50%"></div><svg class="a" style="left:43px;top:33px;fill:#222" width="13" height="14" viewBox="0 0 24 24"><path d="M16 9V4h1c.55 0 1-.45 1-1s-.45-1-1-1H7c-.55 0-1 .45-1 1s.45 1 1 1h1v5c0 1.660-1.340 3-3 3v2h5.970v7l1 1 1-1v-7H19v-2c-1.660 0-3-1.340-3-3z"/></svg><div class="n h">高教學程公用信箱</div><div class="s" style="color:#80868b">你分享的畫面</div><svg class="m" viewBox="0 0 24 24"><use href="#micoff"/><path d="M19 7c1.500 3 1.500 7 0 10M4 9c-1 2-1 4 0 6" stroke="#5f6368" stroke-width="1.500" fill="none"/></svg><svg class="d"><use href="#more"/></svg></div>
<div class="row" style="top:368px"><div class="ra" style="background:#689f38">柏茜</div><div class="n">王柏茜</div><svg class="b"><use href="#nop"/></svg><svg class="m"><use href="#micoff"/></svg><svg class="d"><use href="#more"/></svg></div>
<div class="row" style="top:424px"><svg class="a" style="left:21px;top:12px" width="32" height="32" viewBox="0 0 38 38"><use href="#galaxy"/></svg><div class="n">胡慧文</div><svg class="b"><use href="#nop"/></svg><svg class="m"><use href="#micoff"/></svg><svg class="d"><use href="#more"/></svg></div>
<div class="row" style="top:480px"><div class="ra" style="background:#0097a7">沛茜</div><div class="n">程沛茜</div><svg class="b"><use href="#nop"/></svg><svg class="m"><use href="#micoff"/></svg><svg class="d"><use href="#more"/></svg></div>
<div class="row" style="top:536px"><div class="ra" style="background:#ab47bc">郁淳</div><div class="n">廖郁淳</div><svg class="b"><use href="#nop"/></svg><svg class="m"><use href="#micoff"/></svg><svg class="d"><use href="#more"/></svg></div>
<div class="row" style="top:592px"><svg class="a" style="left:21px;top:12px" width="32" height="32" viewBox="0 0 57 57"><use href="#person"/></svg><div class="n">縣立茄苳國小劉美緻</div><svg class="b"><use href="#nop"/></svg><svg class="m"><use href="#micoff"/></svg><svg class="d"><use href="#more"/></svg></div>
<div class="row" style="top:648px"><div class="ra" style="background:#78909c">君怡</div><div class="n c">譚君怡</div><svg class="m"><use href="#micoff"/></svg><svg class="d"><use href="#more"/></svg></div>
<div class="row" style="top:704px"><div class="ra" style="background:#00897b;font-size:16px">c</div><div class="n">chen mini</div><svg class="b"><use href="#nop"/></svg><svg class="m"><use href="#micoff"/></svg><svg class="d"><use href="#more"/></svg></div>
<div class="row" style="top:760px"><div class="ra" style="background:#00897b;font-size:16px">J</div><div class="n">Jenny</div><svg class="b"><use href="#nop"/></svg><svg class="m"><use href="#micoff"/></svg><svg class="d"><use href="#more"/></svg></div>
<div class="row" style="top:816px"><div class="ra" style="background:#f4511e;font-size:16px">J</div><div class="n c">Justice Lin政逸</div><svg class="a" style="left:243px;top:16px" width="24" height="24" viewBox="0 0 24 24"><circle cx="12" cy="12" r="12" fill="#3080ee"/><rect x="4.500" y="9" width="3.500" height="6" rx="1.200" fill="#fff"/><rect x="10" y="5" width="4" height="14" rx="2" fill="#fff"/><rect x="16" y="9" width="3.500" height="6" rx="1.200" fill="#fff"/></svg><svg class="d"><use href="#more"/></svg></div>
<div class="row" style="top:872px"><svg class="a" style="left:21px;top:12px" width="32" height="32" viewBox="0 0 38 38"><use href="#woman"/></svg><div class="n">shine tseng</div><svg class="b"><use href="#nop"/></svg><svg class="m"><use href="#micoff"/></svg><svg class="d"><use href="#more"/></svg></div>

<!-- bottom bar -->
<div class="t" style="left:24px;top:991px;font-size:16px;font-weight:700;letter-spacing:-.3px;line-height:18px;color:#fff">上午10:30</div>
<div class="a" style="left:109px;top:992px;width:1px;height:16px;background:#dadce0"></div>
<div class="t" style="left:122px;top:991px;font-size:17px;font-weight:700;line-height:18px;color:#fff">tix-wfue-ugm</div>
<div class="cb" style="left:750px;background:#ea4335"></div>
<svg class="i" style="left:759px;top:990px;fill:#fff" width="20" height="20"><use href="#micoff"/></svg>
<div class="cb" style="left:803px"></div>
<div class="i" style="left:827px;top:978px;width:20px;height:20px;border-radius:50%;background:#f47b00;color:#fff;font-size:13px;font-weight:700;line-height:20px;text-align:center">!</div>
<div class="cb" style="left:856px"></div><div class="cb" style="left:908px"></div>
<div class="cb" style="left:959px;background:#8ab4f8"></div><div class="cb" style="left:1011px"></div><div class="cb" style="left:1063px"></div>
<div class="a" style="left:1116px;top:980px;width:54px;height:40px;background:#ea4335;border-radius:20px"></div>
<svg class="i" style="left:1131px;top:988px;fill:#fff" width="24" height="24" viewBox="0 0 24 24"><path d="M12 9c-1.600 0-3.150.25-4.600.72v3.100c0 .39-.23.74-.56.9-.98.49-1.870 1.120-2.660 1.850-.18.18-.43.28-.7.28-.28 0-.53-.11-.71-.29L.29 13.080c-.18-.17-.29-.42-.29-.7 0-.28.11-.53.29-.71C3.340 8.780 7.460 7 12 7s8.660 1.780 11.710 4.670c.18.18.29.43.29.71 0 .28-.11.53-.29.71l-2.480 2.480c-.18.18-.43.29-.71.29-.27 0-.52-.11-.7-.28-.79-.74-1.690-1.360-2.670-1.850-.33-.16-.56-.5-.56-.9v-3.100C15.150 9.250 13.600 9 12 9z"/></svg>
<div class="a" style="left:787px;top:989px;width:347px;height:42px;background:#f9f9f9;box-shadow:0 1px 4px rgba(0,0,0,.3)"></div>
<div class="a" style="left:797px;top:1003px;width:2px;height:12px;background:#bbb"></div><div class="a" style="left:800px;top:1003px;width:2px;height:12px;background:#bbb"></div>
<div class="t" style="left:813px;top:1003px;font-size:12.500px;line-height:15px;color:#333">meet.google.com 正在共用視窗。</div>
<div class="a" style="left:1010px;top:994px;width:80px;height:32px;background:#e07000;border-radius:3px"></div>
<div class="t" style="left:1010px;top:1003px;width:80px;text-align:center;font-size:12.500px;line-height:15px;color:#2b1a00">停止共用</div>
<div class="t" style="left:1100px;top:1003px;font-size:12.500px;line-height:15px;color:#222;text-decoration:underline">隱藏</div>

<svg class="i" style="left:1679px;top:987px;fill:#fff" width="26" height="26" viewBox="0 0 24 24"><path d="M11 7h2v2h-2zm0 4h2v6h-2zm1-9C6.480 2 2 6.480 2 12s4.480 10 10 10 10-4.480 10-10S17.520 2 12 2zm0 18c-4.410 0-8-3.590-8-8s3.590-8 8-8 8 3.590 8 8-3.590 8-8 8z"/></svg>
<div class="i" style="left:1742px;top:965px;width:25px;height:24px;border-radius:12px;background:#5f6368;color:#fff;font-size:12px;font-weight:700;line-height:24px;text-align:center">12</div>
<svg class="i" style="left:1728px;top:987px;fill:#8ab4f8" width="26" height="26" viewBox="0 0 24 24"><path d="M16 11c1.660 0 2.990-1.340 2.990-3S17.660 5 16 5c-1.660 0-3 1.340-3 3s1.340 3 3 3zm-8 0c1.660 0 2.990-1.340 2.990-3S9.660 5 8 5C6.340 5 5 6.340 5 8s1.340 3 3 3zm0 2c-2.330 0-7 1.170-7 3.500V19h14v-2.500c0-2.330-4.670-3.500-7-3.500zm8 0c-.29 0-.62.02-.97.05 1.160.84 1.970 1.970 1.970 3.450V19h6v-2.500c0-2.330-4.670-3.500-7-3.500z"/></svg>
<svg class="i" style="left:1775px;top:987px;fill:#fff" width="26" height="26" viewBox="0 0 24 24"><path d="M20 2H4c-1.100 0-2 .9-2 2v18l4-4h14c1.100 0 2-.9 2-2V4c0-1.100-.9-2-2-2zm0 14H5.170L4 17.170V4h16v12zM6 12h8v2H6zm0-3h12v2H6zm0-3h12v2H6z"/></svg>
<svg class="i" style="left:1824px;top:987px" width="26" height="26" viewBox="0 0 24 24" fill="none" stroke="#fff" stroke-width="2"><path d="M12 3.500L15.500 10h-7z" fill="#fff"/><rect x="3.500" y="13.500" width="7" height="7"/><circle cx="17" cy="17" r="3.500"/></svg>
<svg class="i" style="left:1872px;top:987px" width="26" height="26" viewBox="0 0 24 24" fill="none" stroke="#fff" stroke-width="2"><path d="M8 9V6c0-2.200 1.800-4 4-4s4 1.800 4 4v3"/><path d="M12 22H5V9h14v3"/><circle cx="18" cy="18" r="4"/><path d="M18 16.500v3"/></svg>

<!-- taskbar -->
<div class="a" style="left:0;top:1040px;width:1920px;height:40px;background:linear-gradient(90deg,#3c3117 0,#4a3c1d 8%,#66552f 18%,#6f5d38 30%,#6f5d38 85%,#5c4c2a 90%,#3f3216 96%,#3a2d14 100%)"></div>
<div class="a" style="left:784px;top:1040px;width:49px;height:40px;background:#b28a26"></div>
<svg class="ti" style="left:8px" viewBox="0 0 30 30" fill="#fff"><path d="M7 9l7-1v6.500H7zM15 7.800l8-1.200v8H15zM7 15.500h7V22l-7-1zM15 15.500h8v8l-8-1.200z"/></svg>
<svg class="ti" style="left:57px" viewBox="0 0 30 30" fill="none" stroke="#fff" stroke-width="2"><circle cx="17" cy="12" r="7"/><path d="M12 18l-6 8"/></svg>
<svg class="ti" style="left:105px" viewBox="0 0 30 30" fill="none" stroke="#fff" stroke-width="1.500"><rect x="9" y="11" width="11" height="8"/><path d="M9 7h8M9 23h8M23 7v3M23 13v4M23 20v3"/></svg>
<svg class="ti" style="left:155px" viewBox="0 0 30 30"><path d="M5 8h8l2 2h10v14H5z" fill="#f8c53c"/><path d="M5 13h20v11H5z" fill="#ffd966"/><path d="M11 18h8v6h-8z" fill="#2b7cd3"/></svg>
<div class="ti" style="left:207px;top:1048px;width:25px;height:25px;border-radius:50%;background:conic-gradient(#0c59a4,#114a8b,#1b9de2,#35c1f1,#52d17a,#1b9de2,#0c59a4)"><div class="a" style="left:9px;top:9px;width:14px;height:10px;background:#6f5d38;border-radius:6px 0 8px 6px"></div></div>
<svg class="ti" style="left:253px" viewBox="0 0 30 30"><path d="M5 6l13-2v23L5 25z" fill="#217346"/><text x="8" y="20" font-size="11" font-weight="700" fill="#fff" font-family="Liberation Sans">X</text><rect x="18" y="7" width="8" height="17" fill="#fff"/><path d="M18 11h8M18 15h8M18 19h8M22 7v17" stroke="#217346"/></svg>
<div class="ti" style="left:306px;top:1048px;width:24px;height:25px;background:#00b900;border-radius:7px"><div class="a" style="left:3px;top:4px;width:18px;height:14px;background:#fff;border-radius:50%;color:#00b900;font-size:6px;font-weight:700;line-height:14px;text-align:center">LINE</div><div class="a" style="left:10px;top:17px;width:4px;height:3px;background:#fff"></div></div>
<svg class="ti" style="left:351px" viewBox="0 0 30 30"><path d="M5 6l13-2v23L5 25z" fill="#2b579a"/><text x="7" y="20" font-size="11" font-weight="700" fill="#fff" font-family="Liberation Sans">W</text><rect x="18" y="7" width="8" height="17" fill="#fff"/><path d="M19 11h6M19 15h6M19 19h6" stroke="#2b579a"/></svg>
<svg class="ti" style="left:400px" viewBox="0 0 30 30"><path d="M5 6l13-2v23L5 25z" fill="#d24726"/><text x="8" y="20" font-size="11" font-weight="700" fill="#fff" font-family="Liberation Sans">P</text><rect x="18" y="7" width="8" height="17" fill="#fff"/><circle cx="22" cy="13" r="3" fill="#d24726"/><path d="M19 20h6" stroke="#d24726"/></svg>
<div class="chrome" style="left:452px;top:1048px;width:24px;height:24px"></div>
<svg class="ti" style="left:498px" viewBox="0 0 30 30"><rect x="7" y="4" width="17" height="24" fill="#6b7a8c"/><rect x="9" y="6" width="13" height="5" fill="#5ad0f0"/><path d="M9 13h3v3H9zM14 13h3v3h-3zM19 13h3v3h-3zM9 18h3v3H9zM14 18h3v3h-3zM9 23h3v3H9zM14 23h3v3h-3z" fill="#c8d4e0"/><rect x="19" y="18" width="3" height="8" fill="#1f4e9a"/></svg>
<svg class="ti" style="left:546px" viewBox="0 0 30 30"><path d="M10 5l14-1-3 21-14 2z" fill="#b5dce8" stroke="#e8f4f8"/><path d="M12 8l9-.5-2 14-9 1z" fill="#8cc2d4"/></svg>
<svg class="ti" style="left:595px" viewBox="0 0 30 30"><rect x="6" y="13" width="16" height="15" fill="#c8c8c8" stroke="#222"/><rect x="6" y="13" width="16" height="4" fill="#1a1ac8"/><path d="M17 12c1-3 2-8 4-8s2.500 3 1 5-3 3-5 3z" fill="#d80d0d"/></svg>
<svg class="ti" style="left:645px" viewBox="0 0 30 30"><path d="M8 4h14v23H8z" fill="#2e8b3a"/><circle cx="15" cy="12" r="6" fill="#b8e06a"/><path d="M8 26l14-10" stroke="#8b5a2b" stroke-width="3"/></svg>
<svg class="ti" style="left:694px" viewBox="0 0 30 30"><ellipse cx="14" cy="17" rx="9" ry="10" fill="#cfd8dc"/><circle cx="10" cy="13" r="2" fill="#e53935"/><circle cx="15" cy="11" r="2" fill="#43a047"/><circle cx="10" cy="19" r="2" fill="#1e88e5"/><circle cx="16" cy="23" r="2" fill="#fdd835"/><path d="M17 17L24 4" stroke="#8b5a2b" stroke-width="2.500"/></svg>
<svg class="ti" style="left:743px" viewBox="0 0 30 30"><rect x="6" y="4" width="19" height="23" fill="#fff"/><rect x="6" y="4" width="19" height="3" fill="#a62a1f"/><path d="M9 22c3-2 5-8 5-12 0-2 2-2 2 0 0 4 2 7 6 9-4 0-9 1-13 3z" fill="none" stroke="#c9341f" stroke-width="1.500"/></svg>
<div class="chrome" style="left:796px;top:1048px;width:24px;height:24px"></div>
<div class="av" style="left:808px;top:1060px;width:15px;height:15px;background:#7e57c2;font-size:8px;line-height:15px;z-index:2">高</div>
<div class="chrome" style="left:844px;top:1048px;width:24px;height:24px"></div>
<div class="i" style="left:893px;top:1048px;width:24px;height:24px;border-radius:50%;background:#2a2a33;border:2px solid #c87ab0"><div class="a" style="left:8px;top:5px;border-left:8px solid #fff;border-top:5px solid transparent;border-bottom:5px solid transparent"></div></div>
<div class="ul" style="left:151px;width:31px"></div><div class="ul" style="left:249px;width:38px"></div><div class="ul" style="left:298px;width:40px"></div><div class="ul" style="left:347px;width:40px"></div><div class="ul" style="left:396px;width:40px"></div><div class="ul" style="left:445px;width:40px"></div><div class="ul" style="left:739px;width:40px"></div><div class="ul" style="left:838px;width:38px"></div><div class="ul" style="left:887px;width:38px"></div>

<svg class="i" style="left:1528px;top:1048px" width="28" height="26" viewBox="0 0 28 26"><circle cx="18" cy="9" r="7" fill="#f59a23"/><path d="M6 24c-4 0-5-6-1-7 0-5 7-7 9-3 4-2 8 2 6 5 3 1 3 5-1 5z" fill="#b6d4f2"/></svg>
<div class="t" style="left:1561px;top:1052px;font-size:14.500px;line-height:17px;color:#fff">32°C&nbsp; 多雲時陰</div>
<svg class="i" style="left:1681px;top:1055px" width="13" height="10"><path d="M1 8l5.500-6L12 8" fill="none" stroke="#fff" stroke-width="1.200"/></svg>
<svg class="i" style="left:1703px;top:1051px" width="18" height="18" viewBox="0 0 18 18" fill="none" stroke="#fff"><rect x="2" y="1.500" width="14" height="10"/><path d="M9 11.500V16M4 16h10"/></svg>
<svg class="i" style="left:1728px;top:1051px" width="18" height="18" viewBox="0 0 18 18" fill="none" stroke="#fff"><path d="M2 7v4h2l4 3V4L4 7zM10.500 6c1 2 1 4 0 6M13 4c2 3 2 7 0 10"/></svg>
<div class="i" style="left:1754px;top:1051px;width:13px;height:18px;border-radius:50%;background:radial-gradient(#fff,#888 60%,#444)"></div>
<div class="i" style="left:1777px;top:1051px;width:14px;height:18px;border-radius:50%;background:#bbb;color:#222;font-size:12px;font-weight:700;line-height:18px;text-align:center">×</div>
<div class="t" style="left:1801px;top:1043px;width:60px;text-align:center;font-size:13px;line-height:15px;color:#fff">上午 10:30</div>
<div class="t" style="left:1801px;top:1061px;width:60px;text-align:center;font-size:13px;line-height:15px;color:#fff">2023/7/24</div>
<svg class="i" style="left:1879px;top:1051px" width="18" height="18" viewBox="0 0 18 18"><path d="M1 1h16v12H8l-4 4v-4H1z" fill="#fff"/><path d="M4 4h10M4 7h10M4 10h7" stroke="#6f5d38"/></svg>
<div class="i" style="left:1886px;top:1058px;width:16px;height:18px;border-radius:50%;background:#a8851e;border:1px solid #e0c670;color:#fff;font-size:11px;line-height:17px;text-align:center">3</div>
</body></html>
